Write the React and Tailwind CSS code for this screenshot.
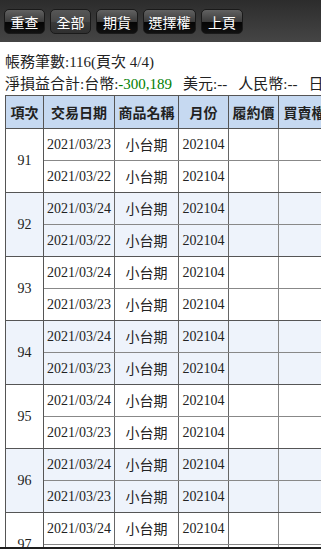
import React from "react";

const groups = [
  { no: 91, rows: ["2021/03/23", "2021/03/22"] },
  { no: 92, rows: ["2021/03/24", "2021/03/22"] },
  { no: 93, rows: ["2021/03/24", "2021/03/23"] },
  { no: 94, rows: ["2021/03/24", "2021/03/23"] },
  { no: 95, rows: ["2021/03/24", "2021/03/23"] },
  { no: 96, rows: ["2021/03/24", "2021/03/23"] },
  { no: 97, rows: ["2021/03/24", "2021/03/23"] },
];

const buttons = [
  { t: "重查", w: "w-[41px]", active: false },
  { t: "全部", w: "w-[41px]", active: true },
  { t: "期貨", w: "w-[42px]", active: false },
  { t: "選擇權", w: "w-[53px]", active: false },
  { t: "上頁", w: "w-[42px]", active: false },
];

const headers = [
  { t: "項次", w: "w-[38px]" },
  { t: "交易日期", w: "w-[71px]" },
  { t: "商品名稱", w: "w-[64px]" },
  { t: "月份", w: "w-[50px]" },
  { t: "履約價", w: "w-[50px]" },
  { t: "買賣權", w: "w-[52px]" },
  { t: "口數", w: "w-[44px]" },
  { t: "成交價", w: "w-[56px]" },
];

const rowBorder = (ri) =>
  ri === 0
    ? "border-t border-t-[#555] border-b border-b-[#888]"
    : "border-b border-b-[#555]";

export default function App() {
  return (
    <div className="w-[321px] h-[549px] overflow-hidden bg-white relative font-['Liberation_Serif','Noto_Sans_CJK_TC',serif] text-[#222]">
      <div className="h-[42px] bg-[linear-gradient(to_bottom,#2c2c2c,#454545)] flex gap-[5px] pl-[4px] pt-[9px] font-['Noto_Sans_CJK_TC',sans-serif]">
        {buttons.map((b) => (
          <div
            key={b.t}
            className={`${b.w} h-[25px] rounded-[5px] text-white text-[14px] leading-[24px] text-center border border-[#1a1a1a] ${
              b.active
                ? "bg-[linear-gradient(to_bottom,#575757_0%,#474747_50%,#3a3a3a_51%,#303030_100%)]"
                : "bg-[linear-gradient(to_bottom,#626262_0%,#3c3c3c_50%,#050505_52%,#111_100%)]"
            }`}
          >
            {b.t}
          </div>
        ))}
      </div>
      <div className="pl-[5px] pt-[9px] text-[15px] leading-[22px] whitespace-nowrap">
        <div>帳務筆數:116(頁次 4/4)</div>
        <div>
          淨損益合計:台幣:<span className="text-[#008000]">-300,189</span>
          <span className="ml-[11px]">美元:--</span>
          <span className="ml-[11px]">人民幣:--</span>
          <span className="ml-[11px]">日幣:--</span>
        </div>
      </div>
      <table className="ml-[5px] border-collapse table-fixed w-[425px] text-[14px]">
        <thead>
          <tr className="bg-[#c6d9f1]">
            {headers.map((h) => (
              <th
                key={h.t}
                className={`${h.w} h-[33px] border border-[#555] font-bold text-center whitespace-nowrap overflow-hidden font-['Noto_Sans_CJK_TC',sans-serif] text-[14px] text-[#222]`}
              >
                {h.t}
              </th>
            ))}
          </tr>
        </thead>
        <tbody>
          {groups.map((g, gi) =>
            g.rows.map((d, ri) => (
              <tr key={`${g.no}-${ri}`} className={gi % 2 === 1 ? "bg-[#eef3fb]" : "bg-white"}>
                {ri === 0 && (
                  <td rowSpan={2} className="border border-[#555] text-center align-middle">
                    {g.no}
                  </td>
                )}
                <td className={`h-[32px] text-center border-x border-[#666] ${rowBorder(ri)}`}>{d}</td>
                <td className={`text-center border-x border-[#666] font-['Noto_Sans_CJK_TC',sans-serif] ${rowBorder(ri)}`}>
                  小台期
                </td>
                <td className={`text-center border-x border-[#666] ${rowBorder(ri)}`}>202104</td>
                <td className={`border-x border-[#888] ${rowBorder(ri)}`}></td>
                <td className={`border-x border-[#888] ${rowBorder(ri)}`}></td>
                <td className={`border-x border-[#888] ${rowBorder(ri)}`}></td>
                <td className={`border-x border-[#888] ${rowBorder(ri)}`}></td>
              </tr>
            ))
          )}
        </tbody>
      </table>
      <div className="absolute left-0 right-0 bottom-0 h-[2px] bg-[#1e1e1e]"></div>
    </div>
  );
}
